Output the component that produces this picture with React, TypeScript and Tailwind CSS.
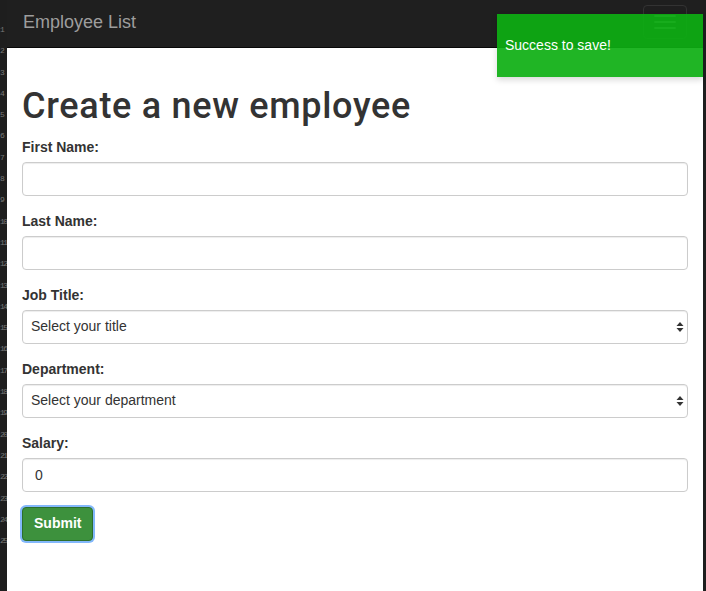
import { useState } from "react";

const lineNumbers = Array.from({ length: 26 }, (_, i) => i);

function Field({ label, children }: { label: string; children: React.ReactNode }) {
  return (
    <div className="mb-[15px]">
      <label className="mb-[5px] block text-[14px] font-bold leading-[20px] text-[#333]">{label}</label>
      {children}
    </div>
  );
}

function SelectBox({ placeholder }: { placeholder: string }) {
  return (
    <div className="relative">
      <select className="h-[34px] w-full appearance-none rounded-[4px] border border-[#ccc] bg-white pl-[8px] pr-[24px] text-[14px] text-[#333] shadow-[inset_0_1px_1px_rgba(0,0,0,0.075)] outline-none">
        <option>{placeholder}</option>
      </select>
      <svg
        className="pointer-events-none absolute right-[4px] top-[11px]"
        width="8"
        height="12"
        viewBox="0 0 8 12"
      >
        <path d="M4 1 L7.5 5 H0.5 Z" fill="#333" />
        <path d="M4 11 L7.5 7 H0.5 Z" fill="#333" />
      </svg>
    </div>
  );
}

export default function App() {
  const [salary, setSalary] = useState("0");

  return (
    <div
      className="flex h-[591px] w-[706px] overflow-hidden bg-[#1e1e1e]"
      style={{ fontFamily: '"Liberation Sans", Arial, sans-serif' }}
    >
      {/* editor gutter peeking out behind the window */}
      <div className="w-[7px] shrink-0 overflow-hidden pt-[19px]">
        <div className="font-mono text-[8px] leading-[21.3px] tracking-[-1.5px] text-[#777]">
          {lineNumbers.map((n) => (
            <div key={n}>{n === 0 ? "" : n}</div>
          ))}
        </div>
      </div>

      <div className="relative flex w-[696px] shrink-0 flex-col bg-white">
        {/* Navbar */}
        <nav className="flex h-[48px] items-start justify-between border-b border-[#080808] bg-[#1f1f1f]">
          <a className="ml-[16px] mt-[12px] text-[18px] leading-[20px] text-[#9d9d9d]">Employee List</a>
          <button className="mr-[16px] mt-[5px] flex h-[34px] w-[44px] flex-col items-center justify-center gap-[4px] rounded-[4px] border border-[#333]">
            <span className="block h-[2px] w-[22px] rounded-[1px] bg-[#888]" />
            <span className="block h-[2px] w-[22px] rounded-[1px] bg-[#888]" />
            <span className="block h-[2px] w-[22px] rounded-[1px] bg-[#888]" />
          </button>
        </nav>

        {/* Form */}
        <div className="px-[15px] pt-[20px]">
          <h1
            className="mb-[10px] mt-[19px] text-[36px] font-medium leading-[1.1] tracking-[0.7px] text-[#333]"
            style={{ fontFamily: 'Roboto, "Liberation Sans", sans-serif' }}
          >
            Create a new employee
          </h1>

          <Field label="First Name:">
            <input className="h-[34px] w-full rounded-[4px] border border-[#ccc] px-[12px] text-[14px] shadow-[inset_0_1px_1px_rgba(0,0,0,0.075)] outline-none" />
          </Field>
          <Field label="Last Name:">
            <input className="h-[34px] w-full rounded-[4px] border border-[#ccc] px-[12px] text-[14px] shadow-[inset_0_1px_1px_rgba(0,0,0,0.075)] outline-none" />
          </Field>
          <Field label="Job Title:">
            <SelectBox placeholder="Select your title" />
          </Field>
          <Field label="Department:">
            <SelectBox placeholder="Select your department" />
          </Field>
          <Field label="Salary:">
            <input
              value={salary}
              onChange={(e) => setSalary(e.target.value)}
              className="h-[34px] w-full rounded-[4px] border border-[#ccc] px-[12px] text-[14px] text-[#333] shadow-[inset_0_1px_1px_rgba(0,0,0,0.075)] outline-none"
            />
          </Field>

          <button className="h-[34px] rounded-[4px] border border-[#2d6f2d] bg-[#3d913d] px-[11px] text-[14px] font-bold text-white shadow-[0_0_0_2px_rgba(90,160,250,0.75)]">
            Submit
          </button>
        </div>

        {/* Toast */}
        <div className="absolute left-[490px] top-[14px] flex h-[63px] w-[206px] items-center bg-[rgba(13,175,18,0.92)] px-[8px] text-[14px] text-white shadow-[0_3px_6px_rgba(0,0,0,0.15)]">
          Success to save!
        </div>
      </div>

      <div className="w-[3px] shrink-0" />
    </div>
  );
}
